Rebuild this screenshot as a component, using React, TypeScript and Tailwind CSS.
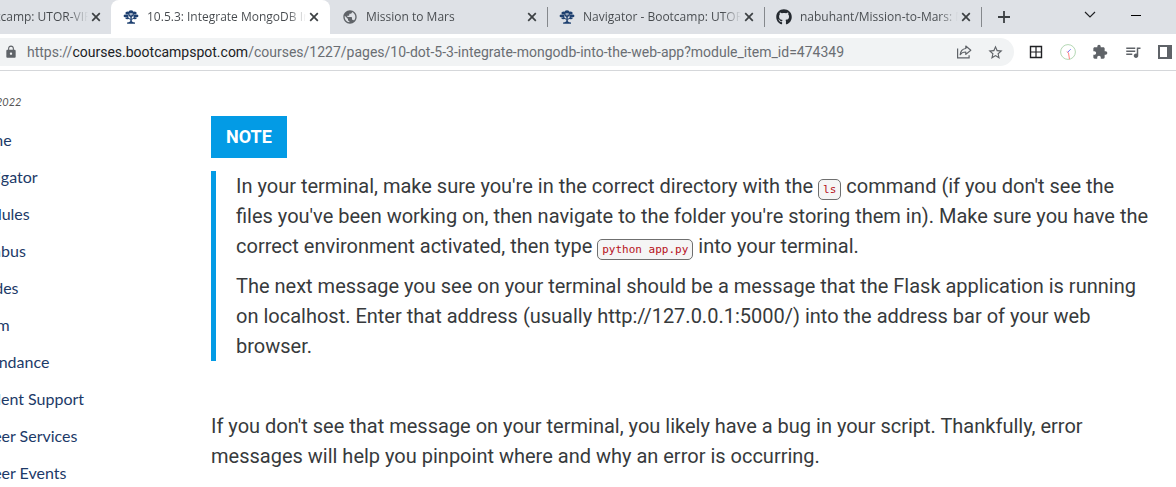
import type { ReactNode } from "react";
import { MdExtension, MdLock, MdPublic, MdQueueMusic, MdStarBorder } from "react-icons/md";
import { FaGithub } from "react-icons/fa";

function TreeIcon() {
  return (
    <svg viewBox="0 0 16 16" className="h-4 w-4" fill="#1e4070" aria-hidden="true">
      <path d="M7.3 5.5h1.5v6.2c0 1 .8 1.400 3.200 1.700v1.300H4.100v-1.300c2.400-.3 3.200-.7 3.200-1.700z" />
      <path d="M7.600 10.700 3.500 7.600M8.500 10.700l4.100-3.100M7.800 8 5.200 4.600M8.300 8l2.600-3.400" stroke="#1e4070" strokeWidth="1" />
      <ellipse cx="8" cy="2.900" rx="2.500" ry="1.700" />
      <ellipse cx="4.600" cy="4.100" rx="2.200" ry="1.500" />
      <ellipse cx="11.500" cy="4.100" rx="2.200" ry="1.500" />
      <ellipse cx="3" cy="7" rx="2.500" ry="1.400" />
      <ellipse cx="13" cy="7" rx="2.500" ry="1.400" />
      <ellipse cx="4.300" cy="9.300" rx="1.900" ry=".9" />
      <ellipse cx="11.800" cy="9.300" rx="1.900" ry=".9" />
      <path d="M5.500 5.500h1.500v2h-1.500zM9.200 5.500h1.500v2H9.200z" />
    </svg>
  );
}

function CloseButton() {
  return (
    <button type="button" aria-label="Close tab" className="flex h-4 w-4 shrink-0 items-center justify-center">
      <svg viewBox="0 0 10 10" className="h-[10px] w-[10px]" stroke="#3c4043" strokeWidth="1.7" aria-hidden="true">
        <path d="M1.2 1.2l7.6 7.6M8.8 1.2L1.2 8.8" />
      </svg>
    </button>
  );
}

type TabProps = { title: string; icon: ReactNode; active?: boolean; divider?: boolean };

function Tab({ title, icon, active, divider }: TabProps) {
  return (
    <div
      className={
        active
          ? "relative flex h-[34px] w-[219px] shrink-0 items-center rounded-t-lg bg-white pr-2 pl-3"
          : "relative flex h-[34px] w-[217px] shrink-0 items-center pr-[7px] pl-3"
      }
    >
      <span className="flex h-4 w-4 shrink-0 items-center justify-center">{icon}</span>
      <a
        href="#"
        className="ml-2 min-w-0 flex-1 overflow-hidden bg-linear-to-r from-[#45494d] from-88% to-transparent bg-clip-text whitespace-nowrap text-transparent"
      >
        {title}
      </a>
      <CloseButton />
      {divider && <span className="absolute top-[7px] -right-px h-5 w-px bg-[#85888c]" />}
    </div>
  );
}

function ShareIcon() {
  return (
    <svg viewBox="0 0 16 16" className="h-4 w-4" fill="none" stroke="#5f6368" strokeWidth="1.2" aria-hidden="true">
      <path d="M1.6 4.5v9.4h11.5v-2.6" />
      <path d="M9.8 2l5 4.2-5 4.2V8C7.3 8 5.4 8.8 4.2 10.7 4.5 7.200 6.500 4.900 9.800 4.500z" strokeLinejoin="round" />
    </svg>
  );
}

function Code({ children }: { children: ReactNode }) {
  return (
    <code className="rounded-[5px] border border-[#6f6f6f] bg-[#f5f5f5] px-1 py-[3px] font-['DejaVu_Sans_Mono',monospace] text-[11px] leading-none text-[#b5121b]">
      {children}
    </code>
  );
}

const courseLinks = [
  "Home",
  "Navigator",
  "Modules",
  "Syllabus",
  "Grades",
  "Zoom",
  "Attendance",
  "Student Support",
  "Career Services",
  "Career Events",
];

export default function App() {
  return (
    <div className="h-screen overflow-hidden bg-white">
      <header className="font-['Open_Sans',sans-serif]">
        <div className="flex h-[34px] items-center overflow-hidden bg-[#dee1e6] text-[12px]">
          <div className="flex w-[111px] shrink-0 justify-end overflow-hidden">
            <Tab title="Home - Bootcamp: UTOR-VIRT" icon={<TreeIcon />} />
          </div>
          <Tab title="10.5.3: Integrate MongoDB Into the Web App" icon={<TreeIcon />} active />
          <Tab title="Mission to Mars" icon={<MdPublic size={16} color="#5f6368" />} divider />
          <Tab title="Navigator - Bootcamp: UTOR-VIRT" icon={<TreeIcon />} divider />
          <Tab title="nabuhant/Mission-to-Mars: Module 10" icon={<FaGithub size={16} color="#24292f" />} divider />
          <button type="button" aria-label="New tab" className="ml-[13px] flex h-5 w-5 items-center justify-center">
            <svg viewBox="0 0 12 12" className="h-3 w-3" stroke="#3c4043" strokeWidth="1.8" aria-hidden="true">
              <path d="M6 0v12M0 6h12" />
            </svg>
          </button>
          <div className="mr-[35px] mb-1 ml-auto flex items-center gap-[35px]">
            <button type="button" aria-label="Search tabs">
              <svg viewBox="0 0 12 8" className="h-2 w-3" fill="none" stroke="#202124" strokeWidth="1.2" aria-hidden="true">
                <path d="M1 1l5 5 5-5" />
              </svg>
            </button>
            <button type="button" aria-label="Minimize">
              <svg viewBox="0 0 10 8" className="h-2 w-[10px]" stroke="#000" aria-hidden="true">
                <path d="M0 4.500h10" />
              </svg>
            </button>
          </div>
        </div>
        <div className="flex h-[37px] items-center border-b border-[#d5d7da] pr-1">
          <div className="flex h-7 min-w-0 flex-1 items-center rounded-r-full bg-[#f1f3f4] pr-[10px] pl-1">
            <MdLock size={14} color="#5f6368" className="shrink-0" />
            <div className="ml-2 min-w-0 flex-1 overflow-hidden pl-px font-[Roboto,sans-serif] text-[14px] whitespace-nowrap text-[#6a6e73]">
              https://<span className="text-[#202124]">courses.bootcampspot.com</span>
              /courses/1227/pages/10-dot-5-3-integrate-mongodb-into-the-web-app?module_item_id=474349
            </div>
            <div className="flex shrink-0 items-center gap-[15px]">
              <button type="button" aria-label="Share this page"><ShareIcon /></button>
              <button type="button" aria-label="Bookmark this page"><MdStarBorder size={17} color="#5f6368" /></button>
            </div>
          </div>
          <div className="ml-[14px] flex items-center gap-4">
            <button type="button" aria-label="Grid extension">
              <svg viewBox="0 0 16 16" className="h-4 w-4" fill="none" stroke="#202124" aria-hidden="true">
                <path d="M2.500 2.500h11v11h-11z" strokeWidth="1.4" />
                <path d="M8 2.500v11M2.500 8h11" strokeWidth="1.200" />
              </svg>
            </button>
            <button type="button" aria-label="Clock extension">
              <svg viewBox="0 0 16 16" className="h-4 w-4" fill="none" aria-hidden="true">
                <circle cx="8" cy="8" r="7.400" stroke="#b4d8b4" />
                <path d="M7.500 8.500l3.200-3.300" stroke="#7272ff" />
                <path d="M7 7.500l1.500 1.500 1 6.300" stroke="#ff8585" />
              </svg>
            </button>
            <button type="button" aria-label="Extensions"><MdExtension size={16} color="#5f6368" /></button>
            <button type="button" aria-label="Media controls"><MdQueueMusic size={18} color="#5f6368" /></button>
            <button type="button" aria-label="Side panel">
              <svg viewBox="0 0 14 14" className="h-[14px] w-[14px]" aria-hidden="true">
                <path fill="#5f6368" fillRule="evenodd" d="M0 0h14v14H0zM2 2v10h7V2z" />
              </svg>
            </button>
          </div>
        </div>
      </header>

      <div className="flex">
        <nav aria-label="Course" className="-ml-[31px] w-[242px] shrink-0 pt-6 font-[Lato,sans-serif] text-[#1c3a68]">
          <p className="text-[11px] leading-[14px] text-[#555] italic">Team 2022</p>
          <ul className="mt-3">
            {courseLinks.map((label) => (
              <li key={label}>
                <a href="#" className="flex h-[37px] items-center text-[16px]">{label}</a>
              </li>
            ))}
          </ul>
        </nav>
        <main className="min-w-0 flex-1 pt-[45px] pr-6 font-[Roboto,sans-serif] text-[20px] leading-[30px] text-[#373a3c]">
          <h2 className="flex h-[42px] w-fit items-center bg-[#039be5] px-[15px] text-[18px] font-bold text-white">NOTE</h2>
          <section className="mt-[13px] border-l-[5px] border-[#039be5] pl-5">
            <p>
              In your terminal, make sure you're in the correct directory with the <Code>ls</Code> command (if you don't
              see the files you've been working on, then navigate to the folder you're storing them in). Make sure you
              have the correct environment activated, then type <Code>python app.py</Code> into your terminal.
            </p>
            <p className="mt-[10px]">
              The next message you see on your terminal should be a message that the Flask application is running on
              localhost. Enter that address (usually http://127.0.0.1:5000/) into the address bar of your web browser.
            </p>
          </section>
          <p className="mt-[50px]">
            If you don't see that message on your terminal, you likely have a bug in your script. Thankfully, error
            messages will help you pinpoint where and why an error is occurring.
          </p>
        </main>
      </div>
    </div>
  );
}
